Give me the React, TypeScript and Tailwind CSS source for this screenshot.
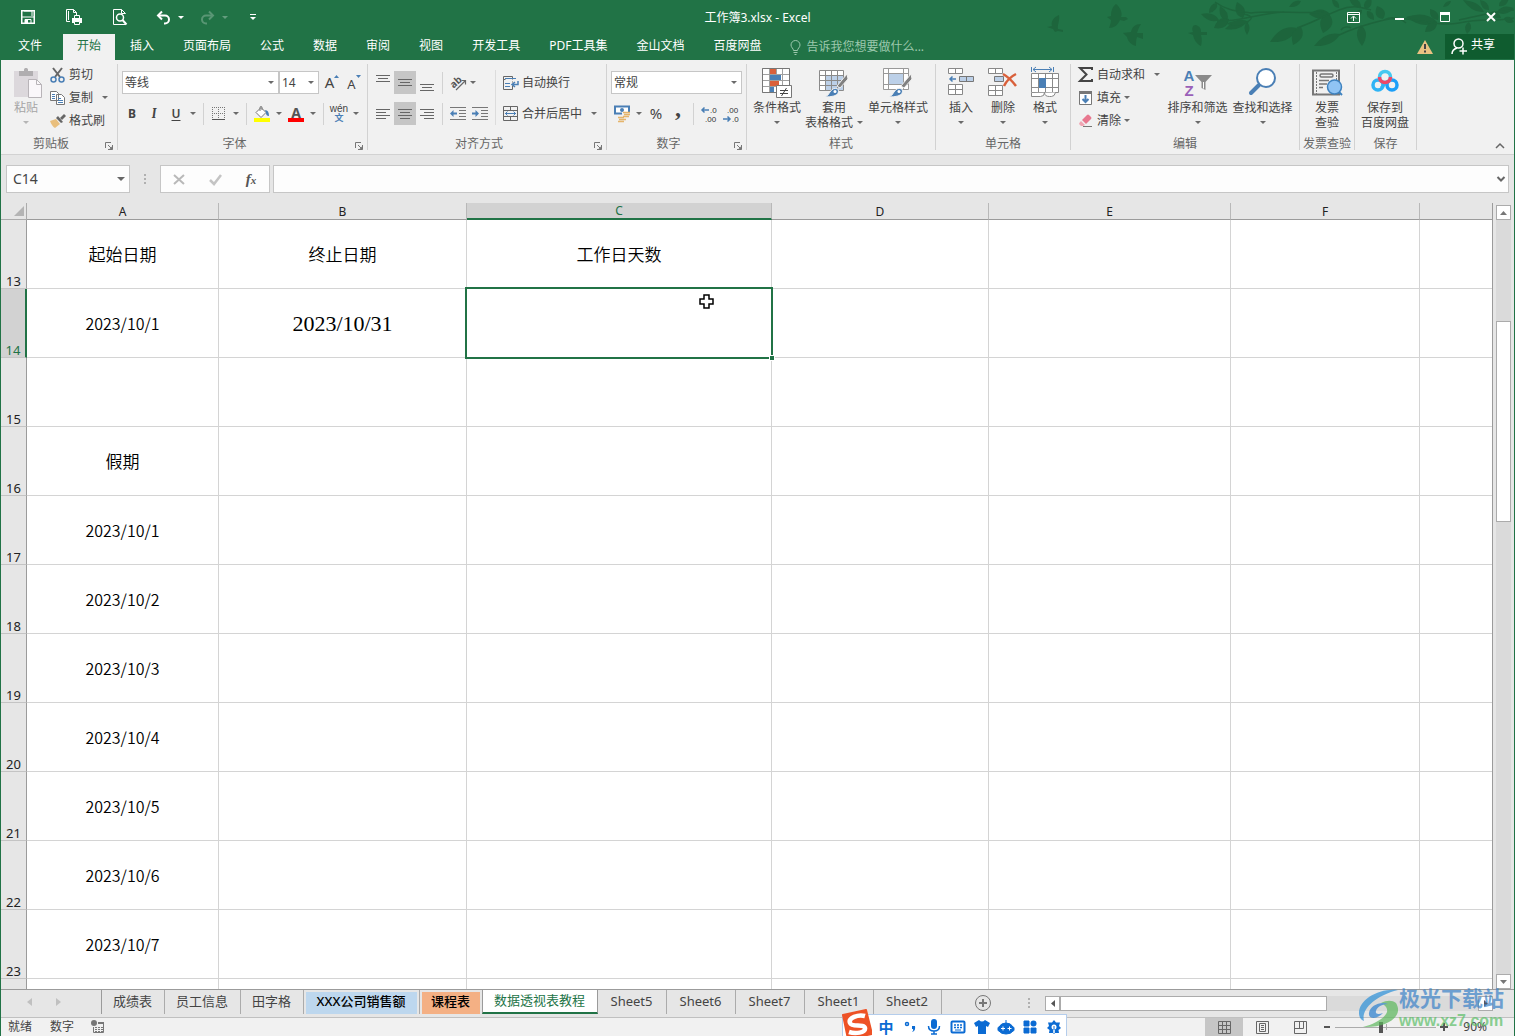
import type { ReactNode } from 'react';
import clsx from 'clsx';

const columns = [
  { name: 'A', width: 'w-[192px]' },
  { name: 'B', width: 'w-[248px]' },
  { name: 'C', width: 'w-[305px]' },
  { name: 'D', width: 'w-[217px]' },
  { name: 'E', width: 'w-[242px]' },
  { name: 'F', width: 'w-[189px]' },
  { name: '', width: '' },
];

const rows: { n: number | null; cells: Record<string, string> }[] = [
  { n: 13, cells: { A: '起始日期', B: '终止日期', C: '工作日天数' } },
  { n: 14, cells: { A: '2023/10/1', B: '2023/10/31' } },
  { n: 15, cells: {} },
  { n: 16, cells: { A: '假期' } },
  { n: 17, cells: { A: '2023/10/1' } },
  { n: 18, cells: { A: '2023/10/2' } },
  { n: 19, cells: { A: '2023/10/3' } },
  { n: 20, cells: { A: '2023/10/4' } },
  { n: 21, cells: { A: '2023/10/5' } },
  { n: 22, cells: { A: '2023/10/6' } },
  { n: 23, cells: { A: '2023/10/7' } },
  { n: null, cells: {} },
];

const tabs = ['文件', '开始', '插入', '页面布局', '公式', '数据', '审阅', '视图', '开发工具', 'PDF工具集', '金山文档', '百度网盘'];

const sheets = [
  { name: '成绩表', width: 'w-[62px]' },
  { name: '员工信息', width: 'w-[76px]' },
  { name: '田字格', width: 'w-[63px]' },
  { name: 'XXX公司销售额', width: 'w-[116px]', fill: 'bg-[#bdd7ee]' },
  { name: '课程表', width: 'w-[62px]', fill: 'bg-[#f4b084]' },
  { name: '数据透视表教程', width: 'w-[116px]', active: true },
  { name: 'Sheet5', width: 'w-[69px]' },
  { name: 'Sheet6', width: 'w-[69px]' },
  { name: 'Sheet7', width: 'w-[69px]' },
  { name: 'Sheet1', width: 'w-[69px]' },
  { name: 'Sheet2', width: 'w-[68px]' },
];

/* ---------- small shared pieces ---------- */

function Svg({ w, h, children, className }: { w: number; h: number; children: ReactNode; className?: string }) {
  return (
    <svg width={w} height={h} viewBox={`0 0 ${w} ${h}`} fill="none" className={clsx('shrink-0 overflow-visible', className)} aria-hidden="true">
      {children}
    </svg>
  );
}

function Caret({ className = 'text-[#6a6a6a]' }: { className?: string }) {
  return (
    <Svg w={6} h={3} className={className}>
      <path d="M0 0h6L3 3z" fill="currentColor" />
    </Svg>
  );
}

function CaretButton({ label, className = 'w-3' }: { label: string; className?: string }) {
  return (
    <button aria-label={label} className={clsx('flex h-[22px] shrink-0 items-center justify-center', className)}>
      <Caret />
    </button>
  );
}

function Tool({ label, on, children }: { label: string; on?: boolean; children: ReactNode }) {
  return (
    <button
      aria-label={label}
      className={clsx('flex h-[23px] w-[22px] shrink-0 items-center justify-center', on && 'bg-[#c6c6c6]')}
    >
      {children}
    </button>
  );
}

function Sep() {
  return <div className="mx-1 h-[22px] w-px shrink-0 bg-[#d2d2d2]" />;
}

function Group({ title, launcher, width, children }: { title: string; launcher?: boolean; width: string; children: ReactNode }) {
  return (
    <>
      <section aria-label={title} className={clsx('flex shrink-0 flex-col', width)}>
        <div className="flex h-[74px]">{children}</div>
        <div className="flex h-5 items-center text-[#666]">
          <span className="flex-1 text-center whitespace-nowrap">{title}</span>
          {launcher && (
            <button aria-label={`${title}设置`} className="flex w-4 items-center justify-center pt-1">
              <Svg w={8} h={8}>
                <path d="M.5 6V.5H6M3 3l3 3M7.500 3v4.500H3" stroke="#777" />
                <path d="M7.500 4v3.500H4z" fill="#777" />
              </Svg>
            </button>
          )}
        </div>
      </section>
      <div className="my-1 w-px shrink-0 bg-[#d2d2d2]" />
    </>
  );
}

function BigButton({ lines, icon, width, caret, inlineCaret }: { lines: string[]; icon: ReactNode; width: string; caret?: boolean; inlineCaret?: boolean }) {
  return (
    <button className={clsx('flex shrink-0 flex-col items-center pt-2 leading-[15px] whitespace-nowrap', width)}>
      <span className="flex h-[32px] items-start">{icon}</span>
      {lines.map((l, i) => (
        <span key={l} className="flex items-center gap-1">
          {l}
          {inlineCaret && i === lines.length - 1 && <Caret />}
        </span>
      ))}
      {caret && (
        <span className="flex h-[15px] items-center">
          <Caret />
        </span>
      )}
    </button>
  );
}

function SelectBox({ label, value, width }: { label: string; value: string; width: string }) {
  return (
    <div className={clsx('relative h-[23px] shrink-0', width)}>
      <select aria-label={label} className="h-full w-full appearance-none border border-[#c6c6c6] bg-white pl-[2px] text-[#444]">
        <option>{value}</option>
      </select>
      <span className="pointer-events-none absolute inset-y-0 right-[5px] flex items-center">
        <Caret />
      </span>
    </div>
  );
}

/* ---------- header art ---------- */

function Leaf({ x1, y1, x2, y2, w }: { x1: number; y1: number; x2: number; y2: number; w: number }) {
  const dx = x2 - x1;
  const dy = y2 - y1;
  const len = Math.hypot(dx, dy);
  const nx = (-dy / len) * w;
  const ny = (dx / len) * w;
  const mx = x1 + dx * 0.4;
  const my = y1 + dy * 0.4;
  return <path d={`M${x1} ${y1}Q${mx + nx} ${my + ny} ${x2} ${y2}Q${mx - nx} ${my - ny} ${x1} ${y1}z`} />;
}

const leaves = [
  [178, 3, 170, 13, 6], [180, 20, 162, 14, 7], [188, 21, 181, 6, 7], [190, 19, 175, 28, 9], [204, 18, 198, 2, 9],
  [208, 21, 186, 29, 8], [208, 22, 208, 35, 5], [210, 22, 187, 24, 5],
  [258, 28, 231, 42, 11], [262, 27, 254, 45, 10], [291, 14, 270, 14, 9], [290, 14, 284, 33, 12], [262, 1, 250, 7, 5],
  [300, 8, 293, -1, 5], [322, 7, 310, -2, 7], [326, 9, 332, -2, 7], [323, 10, 316, 16, 5], [328, 11, 335, 20, 6],
  [301, 34, 275, 46, 9], [322, 25, 323, 46, 9], [344, 19, 338, 6, 9], [312, 22, 307, 15, 4],
  [398, 22, 367, 17, 10], [398, 22, 386, 32, 8], [399, 20, 391, 9, 7], [430, 22, 428, 34, 6], [445, 12, 424, 0, 7],
  [450, 10, 441, 0, 6], [452, 12, 462, 18, 6], [460, 6, 470, -2, 6], [458, 12, 475, 8, 7], [412, 1, 404, 7, 4], [465, 18, 475, 22, 6],
];

function HeaderArt() {
  return (
    <svg width="475" height="60" viewBox="0 0 475 60" className="pointer-events-none absolute top-0 right-0" aria-hidden="true">
      <g fill="#1d653c">
        <path d="M20 15C13 18 12 23 13 26L8 27l6 2 2 3 3-1 5 1v-2l-5-1C18 25 21 21 20 15z" />
        <path d="M77 4c-4 3-5 8-5 12l-4 1 4 3c0 3-1 5-2 8 5 0 9-3 11-8l4 1 4-2-2-2-5 0c2-4-1-10-5-13z" />
        <path d="M102 24c-6 0-9 3-10 8l-8 1 4 4c1 5 5 8 9 9 0-4 0-6 1-9l6 2v-6l-6 0c1-3 2-6 4-9z" />
        <path d="M159 26c-4-3-7 1-5 6l-5 1 5 2c1 5 4 9 8 11 1-4 1-7 0-11l6 0v-3l-6 0c0-3-1-5-3-6z" />
        {leaves.map(([x1, y1, x2, y2, w], i) => (
          <Leaf key={i} x1={x1} y1={y1} x2={x2} y2={y2} w={w} />
        ))}
      </g>
      <g fill="none" stroke="#1d653c" strokeWidth="1.500">
        <path d="M176 2C190 12 200 11 212 13C235 10 260 14 285 12M178 21C200 22 215 14 245 12M205 14c8 2 10 4 3 8" />
        <path d="M258 28C275 22 285 16 300 10S325 8 332 10" />
        <path d="M298 36C310 30 320 26 345 20S395 28 420 23S455 22 475 18M420 20C440 16 450 12 475 10M312 28c-4-2-8-1-10 2M345 20c8-4 16-2 22 3" />
      </g>
    </svg>
  );
}

/* ---------- ribbon icons ---------- */

const g = '#777';
const blue = '#4a7fb5';

const PasteIcon = () => (
  <Svg w={28} h={30}>
    <path d="M0 3h24v26H0z" fill="#dcd8dc" />
    <path d="M5 3h5V1.500C10 .5 11 0 12 0s2 .5 2 1.500V3h5v5H5z" fill="#b0aeb0" />
    <path d="M14.500 11.500h8l5 5v13h-13z" fill="#faf7fa" stroke="#b8b4b8" />
    <path d="M22.500 11.500v5h5" stroke="#b8b4b8" />
  </Svg>
);
const CutIcon = () => (
  <Svg w={16} h={16}>
    <path d="M3 1l7 9M12 1L5 10" stroke="#666" strokeWidth="2" />
    <circle cx="3.500" cy="12.500" r="2.500" stroke={blue} strokeWidth="1.500" />
    <circle cx="11.500" cy="12.500" r="2.500" stroke={blue} strokeWidth="1.500" />
  </Svg>
);
const CopyIcon = () => (
  <Svg w={16} h={16}>
    <path d="M.5 1.500h6l2 2v7h-8zM6.500 4.500h5l3 3v7h-8z" fill="#fff" stroke="#777" />
    <path d="M2 4.500h3M2 6.500h3M2 8.500h3M8 8.500h3M8 10.500h5M8 12.500h5" stroke={blue} />
  </Svg>
);
const BrushIcon = () => (
  <Svg w={16} h={16}>
    <path d="M0 8l6-2 4 5-5 4c-2-1-4-4-5-7z" fill="#e9bf7d" />
    <path d="M6 5l2-2 5 6-2 1z" fill="#666" />
    <path d="M10 5l4-4 2 2-4 4z" fill="#666" />
  </Svg>
);
const BorderIcon = () => (
  <Svg w={14} h={14}>
    <path d="M.5 0v12M12.500 0v12M6.500 0v12M0 .5h13M0 6.500h13" stroke={g} strokeDasharray="1 1" />
    <path d="M0 12.500h13" stroke="#555" />
  </Svg>
);
const FillColorIcon = () => (
  <Svg w={16} h={16}>
    <path d="M2 6.500L7 1.500l5 5-5 5z" fill="#fff" stroke="#777" />
    <path d="M6 5V1.500Q6 .5 7 .5t1 1V4" stroke="#777" />
    <path d="M11 4q4 0 4 6-3 0-3-3z" fill={blue} />
    <path d="M0 12h16v4H0z" fill="#ff0" />
  </Svg>
);
const FontColorIcon = () => (
  <span className="flex w-4 flex-col items-center">
    <span className="h-[12px] text-[14px] leading-[14px] font-bold text-[#555]">A</span>
    <span className="h-1 w-4 bg-[#f00]" />
  </span>
);
function Lines({ align }: { align: 'left' | 'center' | 'right' }) {
  return (
    <Svg w={14} h={16}>
      {[14, 10, 14, 10].map((w, i) => (
        <rect key={i} x={align === 'left' ? 0 : align === 'right' ? 14 - w : (14 - w) / 2} y={3 + i * 3} width={w} height="1" fill="#666" />
      ))}
    </Svg>
  );
}
function VLines({ offset }: { offset: number }) {
  return (
    <Svg w={14} h={16}>
      <path d={`M0 ${offset + 0.5}h14M2 ${offset + 3.5}h10M0 ${offset + 6.5}h14`} stroke="#666" />
    </Svg>
  );
}
const OrientIcon = () => (
  <Svg w={17} h={16}>
    <text x="1" y="11" fontSize="10" fontWeight="bold" fill="#555" transform="rotate(-42 6 9)">ab</text>
    <path d="M6 15l9-9M11.500 5.500h4v4" stroke="#666" strokeWidth="1.200" />
  </Svg>
);
function IndentIcon({ right }: { right?: boolean }) {
  return (
    <Svg w={16} h={13}>
      <path d="M0 .5h16M9 3.500h7M9 6.500h7M9 9.500h7M0 12.500h16" stroke="#777" />
      <path d={right ? 'M7 6.500L3.500 3v2.500H0v2h3.500V10z' : 'M0 6.500L3.500 3v2.500H7v2H3.500V10z'} fill={blue} />
    </Svg>
  );
}
const WrapIcon = () => (
  <Svg w={16} h={16}>
    <path d="M.5 1.500h9v3M.5 1.500v13h9v-4M.5 4.500h2M9.500 6.500v1" stroke="#666" />
    <path d="M2 3.500h11M2 8.500h5M2 11.500h5" stroke={blue} />
    <path d="M15 6v3.500h-5M12 7l-3 2.500 3 2.500" stroke={blue} strokeWidth="1.500" />
  </Svg>
);
const MergeIcon = () => (
  <Svg w={16} h={16}>
    <path d="M.5.5h14v14H.5zM.5 4.500h14M.5 10.500h14M7.500.5v4M7.500 10.500v4" stroke="#666" />
    <path d="M2 7.500h11M4.500 5.500l-2 2 2 2M10.500 5.500l2 2-2 2" stroke={blue} />
  </Svg>
);
const MoneyIcon = () => (
  <Svg w={17} h={17}>
    <path d="M1 1.500h14v7H1z" fill="#fff" stroke={blue} strokeWidth="2" />
    <circle cx="8" cy="5" r="2" fill={blue} />
    <path d="M8 7h9v9H4v-4h4z" fill="#f1f1f1" />
    <path d="M9 7.500h7M10 9.500h6M9 11.500h6M4 12.500h6M5 14.500h7M4 16.500h6" stroke="#e5b56c" strokeWidth="1.500" />
  </Svg>
);
function DecimalIcon({ less }: { less?: boolean }) {
  return (
    <Svg w={16} h={18} className="font-['Liberation_Sans',sans-serif]">
      <text x={less ? 4 : 9} y="8" fontSize="8" fill="#333">{less ? '.00' : '.0'}</text>
      <text x={less ? 9 : 4} y="17" fontSize="8" fill="#333">{less ? '.0' : '.00'}</text>
      <path d={less ? 'M0 14h7M4.500 11.500L7 14l-2.500 2.500' : 'M1 5h7M3.500 2.500L1 5l2.500 2.500'} stroke={blue} strokeWidth="1.500" />
    </Svg>
  );
}
const CondIcon = () => (
  <Svg w={30} h={30}>
    <path d="M.5.5h27v24H.5z" fill="#fff" />
    <path d="M.5.5h27v24H.5zM.5 6.500h27M.5 12.500h27M.5 18.500h27M7.500.5v24M14.500.5v24M20.500.5v24" stroke="#a0a0a0" />
    <path d="M8 1h6v5H8zM8 13h9v5H8z" fill="#d9603b" />
    <path d="M8 7h11v5H8zM8 19h4v5H8z" fill={blue} />
    <path d="M.5.5h27v24H.5z" stroke="#777" />
    <path d="M14.500 17.500h15v12h-15z" fill="#fff" stroke="#777" />
    <path d="M18 22.500h8M18 25.500h8M24.500 20l-5 8" stroke="#444" />
  </Svg>
);
const Brush = () => (
  <>
    <path d="M18 18l10-12 1 5-8 9z" fill="#808080" stroke="#f1f1f1" />
    <path d="M6 29q3-1 5-5 3-5 8-3 2 5-4 7-4 1-9 1z" fill={blue} stroke="#f1f1f1" />
    <circle cx="16" cy="23.500" r="1.500" fill="#fff" />
  </>
);
const TableIcon = () => (
  <Svg w={30} h={30}>
    <path d="M.5 2.500h24v20H.5z" fill="#fff" />
    <path d="M7 8h17v14H7z" fill="#bcd0e8" />
    <path d="M.5 2.500h24v20H.5zM.5 7.500h24M.5 12.500h24M.5 17.500h24M6.500 2.500v20M12.500 2.500v20M18.500 2.500v20" stroke="#8a8a8a" />
    <Brush />
  </Svg>
);
const StyleIcon = () => (
  <Svg w={30} h={30}>
    <path d="M.5.5h25v21H.5z" fill="#fff" />
    <path d="M.5.5h25v21H.5zM.5 5.500h25M.5 16.500h25M5.500.5v21M20.500.5v21" stroke="#999" />
    <path d="M6 6h14v10H6z" fill="#bcd0e8" />
    <Brush />
  </Svg>
);
const InsertIcon = () => (
  <Svg w={27} h={28}>
    <path d="M.5.5h14v5H.5zM7.500.5v5M.5 16.500h14v10H.5zM.5 21.500h14M7.500 16.500v10" fill="#fff" stroke="#888" />
    <path d="M11.500 8.500h14v5h-14zM18.500 8.500v5" fill="#bcd0e8" stroke="#777" />
    <path d="M8 11H2M4.500 8.500L2 11l2.500 2.500" stroke={blue} strokeWidth="1.500" />
  </Svg>
);
const DeleteIcon = () => (
  <Svg w={30} h={28}>
    <path d="M.5.5h14v5H.5zM7.500.5v5M.5 17.500h14v10H.5zM.5 22.500h14M7.500 17.500v10" fill="#fff" stroke="#888" />
    <path d="M6.500 8.500h9v5h-9z" fill="#bcd0e8" stroke="#777" />
    <path d="M15 6q7 4 13 12M28 6q-8 4-12 12" stroke="#d9603b" strokeWidth="2.500" />
  </Svg>
);
const FormatIcon = () => (
  <Svg w={28} h={31}>
    <path d="M.5-1v5M22.500-1v5M2 1.500h19M5-1L2 1.500 5 4M18-1l3 2.500L18 4" stroke={blue} />
    <path d="M.5 5.500h27v19H.5z" fill="#fff" />
    <path d="M.5 5.500h27v19H.5zM.5 10.500h27M.5 19.500h27M7.500 5.500v19M14.500 5.500v19M21.500 5.500v19" stroke="#8a8a8a" />
    <path d="M8 10h7v10H8z" fill={blue} />
    <path d="M.5 25v3.500h9q4 0 4-4 0 4 5 4h2q3 0 4-4" stroke="#888" fill="#fff" />
  </Svg>
);
const SumIcon = () => (
  <Svg w={16} h={16}>
    <path d="M14 3V1H2l6.500 6.500L2 14h12v-2" stroke="#444" strokeWidth="2" />
  </Svg>
);
const FillIcon = () => (
  <Svg w={16} h={16}>
    <path d="M1.500 1.500h12v13h-12z" fill="#fff" stroke="#777" />
    <path d="M1 1h13v3H1z" fill="#777" />
    <path d="M7.500 5v7M4.500 9l3 3 3-3" stroke={blue} strokeWidth="2" />
  </Svg>
);
const EraserIcon = () => (
  <Svg w={16} h={16}>
    <path d="M4 7l5-5q1-1 2 0l2 2q1 1 0 2L8 11z" fill="#e8788f" />
    <path d="M3 8l4 4-2 1H3L1 11q0-1 2-3z" fill="#f0a5b3" />
    <path d="M5 13.500h9" stroke="#777" />
  </Svg>
);
const SortIcon = () => (
  <span className="flex items-start">
    <span className="flex w-[12px] flex-col items-center font-['Liberation_Sans',sans-serif] text-[15px] leading-[15px] font-bold">
      <span className="text-[#4a7fb5]">A</span>
      <span className="text-[#9a60b8]">Z</span>
    </span>
    <Svg w={17} h={24}>
      <path d="M0 7h17l-6.500 7v8l-4-2v-6z" fill="#8a8a8a" />
      <path d="M8 14v6l1 1v-7z" fill="#fff" />
    </Svg>
  </span>
);
const FindIcon = () => (
  <Svg w={28} h={28}>
    <path d="M10 17L2 25" stroke={blue} strokeWidth="4" strokeLinecap="round" />
    <circle cx="17" cy="10" r="9" fill="#fff" stroke={blue} strokeWidth="2" />
  </Svg>
);
const InvoiceIcon = () => (
  <Svg w={30} h={30}>
    <path d="M1 2.500h26v24H1z" stroke="#777" strokeWidth="2" />
    <path d="M4.500 4v22M24.500 4v22" stroke="#777" strokeDasharray="2 1" />
    <rect x="8" y="6" width="13" height="3" rx="1.500" stroke="#777" strokeWidth="1.500" />
    <path d="M7 12.500h10M7 16h8M7 19.500h4" stroke="#777" strokeWidth="1.500" />
    <circle cx="22.500" cy="19" r="7" fill="#90c4f4" stroke="#3f83c0" strokeWidth="1.500" />
    <path d="M27 24l3 3" stroke="#3f83c0" strokeWidth="2" />
  </Svg>
);
const NetdiskIcon = () => (
  <Svg w={28} h={26}>
    <circle cx="7" cy="17" r="5" stroke="#2fb4f5" strokeWidth="3.500" />
    <circle cx="21" cy="17" r="5" stroke="#1c9ff8" strokeWidth="3.500" />
    <path d="M10 20l7-7" stroke="#2fb4f5" strokeWidth="3" />
    <circle cx="14" cy="9" r="5.500" stroke="#45c8f0" strokeWidth="3.500" />
    <path d="M8.500 9a5.500 5.500 0 0011 0" stroke="#ee4868" strokeWidth="3.500" />
  </Svg>
);

/* ---------- window parts ---------- */

function TitleBar() {
  return (
    <div className="relative flex h-[34px] items-center text-white">
      <div className="flex flex-1 items-center">
        <button aria-label="保存" className="flex w-[46px] justify-center pl-2">
          <Svg w={14} h={14}>
            <path d="M.75.75h12.500v12.500H.75z" stroke="#fff" strokeWidth="1.500" />
            <path d="M1 7h12M3 1h8v5M4 14V9.500h6V14" stroke="#fff" />
            <path d="M4 10h3v4H4z" fill="#fff" />
          </Svg>
        </button>
        <button aria-label="快速打印" className="flex w-[46px] justify-center pl-2">
          <Svg w={17} h={17}>
            <path d="M4 12.500H.500V.500h7l3 3V6M7.500.500v3h3" stroke="#fff" />
            <path d="M2.500 2v9" stroke="#fff" />
            <path d="M6 9h10v5H6z" fill="#fff" />
            <path d="M8.500 9V6.500h5V9M8.500 12.500h5v3h-5z" fill="#217346" stroke="#fff" />
          </Svg>
        </button>
        <button aria-label="打印预览" className="flex w-[46px] justify-center pl-2">
          <Svg w={15} h={17}>
            <path d="M12.500 13v2.500H.500V.500h8l4 4M8.500.500v4h4" stroke="#fff" />
            <circle cx="7" cy="8.500" r="3.500" stroke="#fff" strokeWidth="1.500" />
            <path d="M9.500 11l4 4.500" stroke="#fff" strokeWidth="2" />
          </Svg>
        </button>
        <button aria-label="撤消" className="flex w-[36px] justify-center pl-3">
          <Svg w={15} h={13}>
            <path d="M2 4.500h7a4 4 0 010 8H8" stroke="#fff" strokeWidth="2" />
            <path d="M6 .5l-4 4 4 4" stroke="#fff" strokeWidth="2" />
          </Svg>
        </button>
        <button aria-label="撤消列表" className="flex w-3 justify-center">
          <Caret className="text-white" />
        </button>
        <button aria-label="恢复" className="flex w-[32px] justify-center pl-2 opacity-25">
          <Svg w={15} h={13}>
            <path d="M13 4.500H6a4 4 0 000 8h1" stroke="#fff" strokeWidth="2" />
            <path d="M9 .5l4 4-4 4" stroke="#fff" strokeWidth="2" />
          </Svg>
        </button>
        <button aria-label="恢复列表" className="flex w-3 justify-center opacity-30">
          <Caret className="text-white" />
        </button>
        <button aria-label="自定义快速访问工具栏" className="flex w-[32px] justify-center pl-3">
          <Svg w={6} h={7}>
            <path d="M0 .5h6" stroke="#fff" />
            <path d="M0 3h6L3 6z" fill="#fff" />
          </Svg>
        </button>
      </div>
      <h1 className="pt-px text-[12px]">工作簿3.xlsx - Excel</h1>
      <div className="flex flex-1 justify-end">
        <button aria-label="功能区显示选项" className="flex h-8 w-[46px] items-center justify-center">
          <Svg w={13} h={11}>
            <path d="M.5.5h12v10H.5zM.5 2.500h12" stroke="#fff" />
            <path d="M6.500 9V4.500M4 6.500l2.500-2.500L9 6.500" stroke="#fff" />
          </Svg>
        </button>
        <button aria-label="最小化" className="flex h-8 w-[46px] items-center justify-center pt-1">
          <Svg w={9} h={2}>
            <path d="M0 1h9" stroke="#fff" strokeWidth="2" />
          </Svg>
        </button>
        <button aria-label="最大化" className="flex h-8 w-[46px] items-center justify-center">
          <Svg w={10} h={10}>
            <path d="M.5.5h9v9h-9z" stroke="#fff" />
            <path d="M0 0h10v3H0z" fill="#fff" />
          </Svg>
        </button>
        <button aria-label="关闭" className="flex h-8 w-[46px] items-center justify-center">
          <Svg w={10} h={10}>
            <path d="M1 1l8 8M9 1L1 9" stroke="#fff" strokeWidth="2" />
          </Svg>
        </button>
      </div>
    </div>
  );
}

function TabRow() {
  return (
    <div className="relative flex h-[26px] items-stretch text-white">
      <nav className="flex gap-px pl-[3px]">
        {tabs.map((t) => (
          <button
            key={t}
            className={clsx(
              'px-[14px] pb-[2px] whitespace-nowrap',
              t === '文件' && 'mr-[6px]',
              t === '开始' && 'bg-[#f1f1f1] text-[#217346]',
            )}
          >
            {t}
          </button>
        ))}
      </nav>
      <label className="ml-[15px] flex flex-1 items-center gap-[5px] text-[#9cc8ad]">
        <Svg w={11} h={15}>
          <path d="M3.500 10.500C3.500 8.500 1 7.500 1 5a4.500 4.500 0 019 0c0 2.500-2.500 3.500-2.500 5.500zM3.500 12.500h4M4.500 14.500h2" stroke="#9cc8ad" />
        </Svg>
        <input aria-label="告诉我" placeholder="告诉我您想要做什么..." className="w-full bg-transparent outline-none placeholder:text-[#9cc8ad]" />
      </label>
      <button aria-label="警告" className="flex w-[40px] items-center justify-center">
        <Svg w={16} h={14}>
          <path d="M8 0l8 14H0z" fill="#eac282" />
          <path d="M8 4v5M8 10.500v2" stroke="#444" strokeWidth="2" />
        </Svg>
      </button>
      <button className="mb-px flex w-[69px] items-center gap-1 bg-[#0f5c2f] pb-1 pl-[6px]">
        <Svg w={16} h={17} className="mt-1">
          <circle cx="7.500" cy="5.500" r="4.500" stroke="#fff" strokeWidth="1.500" />
          <path d="M1 16c0-4 2-5 5-6M12 9.500v7M8.500 13H16" stroke="#fff" strokeWidth="1.500" />
        </Svg>
        共享
      </button>
    </div>
  );
}

function Ribbon() {
  return (
    <div className="flex h-[95px] border-b border-[#d2d2d2] bg-[#f1f1f1] text-[#444]">
      <Group title="剪贴板" launcher width="w-[116px]">
        <button className="flex w-[49px] flex-col items-center pt-2 pr-[1px] pl-[2px] leading-[15px] text-[#a5a5a5]">
          <span className="h-8 pl-1">
            <PasteIcon />
          </span>
          粘贴
          <span className="flex h-[15px] items-center">
            <Caret className="text-[#b5b5b5]" />
          </span>
        </button>
        <div className="flex flex-col pt-[3px]">
          <button className="flex h-[23px] items-center gap-[3px]">
            <CutIcon />
            剪切
          </button>
          <div className="flex h-[23px] items-center">
            <button className="flex items-center gap-[3px]">
              <CopyIcon />
              复制
            </button>
            <CaretButton label="复制选项" className="ml-[6px] w-3" />
          </div>
          <button className="flex h-[23px] items-center gap-[3px]">
            <BrushIcon />
            格式刷
          </button>
        </div>
      </Group>

      <Group title="字体" launcher width="w-[249px]">
        <div className="flex flex-col gap-2 pt-[11px] pl-[3px]">
          <div className="flex pl-px">
            <SelectBox label="字体" value="等线" width="w-[157px]" />
            <SelectBox label="字号" value="14" width="w-[40px]" />
            <div className="flex pl-[2px]">
              <Tool label="增大字号">
                <span className="text-[15px]">A</span>
                <Svg w={5} h={3} className="mb-[12px]">
                  <path d="M0 3h5L2.500 0z" fill={blue} />
                </Svg>
              </Tool>
              <Tool label="减小字号">
                <span className="pt-1 text-[13px]">A</span>
                <Svg w={5} h={3} className="mb-[12px]">
                  <path d="M0 0h5L2.500 3z" fill={blue} />
                </Svg>
              </Tool>
            </div>
          </div>
          <div className="flex items-center">
            <Tool label="加粗"><b>B</b></Tool>
            <Tool label="倾斜"><i className="font-serif text-[13px] font-bold">I</i></Tool>
            <Tool label="下划线"><span className="font-semibold underline underline-offset-2">U</span></Tool>
            <CaretButton label="下划线选项" />
            <Sep />
            <Tool label="边框"><BorderIcon /></Tool>
            <CaretButton label="边框选项" />
            <Sep />
            <Tool label="填充颜色"><FillColorIcon /></Tool>
            <CaretButton label="填充颜色选项" />
            <Tool label="字体颜色"><FontColorIcon /></Tool>
            <CaretButton label="字体颜色选项" />
            <Sep />
            <Tool label="拼音">
              <span className="flex flex-col items-center font-['Liberation_Sans','Noto_Sans_CJK_SC',sans-serif] text-[10px] leading-[9px]">
                wén
                <span className="text-[9px] leading-[11px] font-bold text-[#4a7fb5]">文</span>
              </span>
            </Tool>
            <CaretButton label="拼音选项" />
          </div>
        </div>
      </Group>

      <Group title="对齐方式" launcher width="w-[238px]">
        <div className="flex flex-col gap-2 pt-[11px] pl-1">
          <div className="flex items-center">
            <Tool label="顶端对齐"><VLines offset={0} /></Tool>
            <Tool label="垂直居中" on><VLines offset={4} /></Tool>
            <Tool label="底端对齐"><VLines offset={9} /></Tool>
            <Sep />
            <Tool label="方向"><OrientIcon /></Tool>
            <CaretButton label="方向选项" className="w-2" />
          </div>
          <div className="flex items-center">
            <Tool label="左对齐"><Lines align="left" /></Tool>
            <Tool label="居中" on><Lines align="center" /></Tool>
            <Tool label="右对齐"><Lines align="right" /></Tool>
            <Sep />
            <Tool label="减少缩进量"><IndentIcon /></Tool>
            <Tool label="增加缩进量"><IndentIcon right /></Tool>
          </div>
        </div>
        <div className="mx-1 mt-[10px] h-[55px] w-px bg-[#dcdcdc]" />
        <div className="flex flex-col gap-2 pt-[11px] pl-[3px]">
          <button className="flex h-[23px] items-center gap-[3px]">
            <WrapIcon />
            自动换行
          </button>
          <div className="flex h-[23px] items-center">
            <button className="flex items-center gap-[3px]">
              <MergeIcon />
              合并后居中
            </button>
            <CaretButton label="合并选项" className="ml-[6px] w-3" />
          </div>
        </div>
      </Group>

      <Group title="数字" launcher width="w-[139px]">
        <div className="flex flex-col gap-2 pt-[11px] pl-1">
          <SelectBox label="数字格式" value="常规" width="w-[131px]" />
          <div className="flex items-center">
            <Tool label="会计数字格式"><MoneyIcon /></Tool>
            <CaretButton label="会计数字格式选项" />
            <Tool label="百分比样式"><span className="text-[15px]">%</span></Tool>
            <Tool label="千位分隔样式"><span className="pb-3 font-['Liberation_Serif',serif] text-[24px] font-bold">,</span></Tool>
            <Sep />
            <Tool label="增加小数位数"><DecimalIcon /></Tool>
            <Tool label="减少小数位数"><DecimalIcon less /></Tool>
          </div>
        </div>
      </Group>

      <Group title="样式" width="w-[188px]">
        <div className="flex pl-1">
          <BigButton lines={['条件格式']} icon={<CondIcon />} width="w-[52px]" caret />
          <BigButton lines={['套用', '表格格式']} icon={<TableIcon />} width="w-[62px]" inlineCaret />
          <BigButton lines={['单元格样式']} icon={<StyleIcon />} width="w-[66px]" caret />
        </div>
      </Group>

      <Group title="单元格" width="w-[134px]">
        <div className="flex pl-1">
          <BigButton lines={['插入']} icon={<InsertIcon />} width="w-[42px]" caret />
          <BigButton lines={['删除']} icon={<DeleteIcon />} width="w-[42px]" caret />
          <BigButton lines={['格式']} icon={<FormatIcon />} width="w-[42px]" caret />
        </div>
      </Group>

      <Group title="编辑" width="w-[228px]">
        <div className="flex w-[94px] flex-col pt-[3px] pl-[7px]">
          <div className="flex h-[23px] items-center">
            <button className="flex items-center gap-[3px]">
              <SumIcon />
              自动求和
            </button>
            <CaretButton label="求和选项" className="ml-[6px] w-3" />
          </div>
          <div className="flex h-[23px] items-center">
            <button className="flex items-center gap-[3px]">
              <FillIcon />
              填充
            </button>
            <CaretButton label="填充选项" />
          </div>
          <div className="flex h-[23px] items-center">
            <button className="flex items-center gap-[3px]">
              <EraserIcon />
              清除
            </button>
            <CaretButton label="清除选项" />
          </div>
        </div>
        <BigButton lines={['排序和筛选']} icon={<SortIcon />} width="w-[65px]" caret />
        <BigButton lines={['查找和选择']} icon={<FindIcon />} width="w-[65px]" caret />
      </Group>

      <Group title="发票查验" width="w-[54px]">
        <BigButton lines={['发票', '查验']} icon={<InvoiceIcon />} width="w-[54px]" />
      </Group>

      <Group title="保存" width="w-[61px]">
        <BigButton lines={['保存到', '百度网盘']} icon={<NetdiskIcon />} width="w-[60px]" />
      </Group>

      <div className="flex flex-1 items-end justify-end pr-[9px] pb-[5px]">
        <button aria-label="折叠功能区">
          <Svg w={10} h={6}>
            <path d="M1 5l4-4 4 4" stroke="#666" strokeWidth="1.500" />
          </Svg>
        </button>
      </div>
    </div>
  );
}

function FormulaBar() {
  return (
    <div className="flex h-[48px] items-start pt-[10px] pr-[5px] pl-[5px]">
      <div className="relative h-7 w-[124px]">
        <input aria-label="名称框" defaultValue="C14" className="h-full w-full border border-[#c6c6c6] bg-[#fdfdfd] pb-[2px] pl-[6px] text-[14px] text-[#444]" />
        <button aria-label="名称列表" className="absolute inset-y-0 right-[5px] flex items-center">
          <Svg w={8} h={4}>
            <path d="M0 0h8L4 4z" fill="#666" />
          </Svg>
        </button>
      </div>
      <div className="flex h-7 w-[30px] items-center justify-center">
        <Svg w={2} h={10}>
          <path d="M0 0h2v2H0zM0 4h2v2H0zM0 8h2v2H0z" fill="#b0b0b0" />
        </Svg>
      </div>
      <div className="flex h-7 w-[110px] border border-[#c6c6c6] bg-[#fdfdfd]">
        <button aria-label="取消" className="flex flex-1 items-center justify-center">
          <Svg w={12} h={11}>
            <path d="M1 1l10 9M11 1L1 10" stroke="#b9b9b9" strokeWidth="2" />
          </Svg>
        </button>
        <button aria-label="输入" className="flex flex-1 items-center justify-center">
          <Svg w={13} h={11}>
            <path d="M1 6l4 4 7-9" stroke="#c4c4c4" strokeWidth="2.500" />
          </Svg>
        </button>
        <button aria-label="插入函数" className="flex-1 font-['Liberation_Serif',serif] text-[15px] leading-[26px] font-bold text-[#555] italic">
          f<span className="text-[11px]">x</span>
        </button>
      </div>
      <div className="relative ml-[3px] h-7 flex-1">
        <input aria-label="编辑栏" className="h-full w-full border border-[#c6c6c6] bg-[#fdfdfd] px-2 text-[14px]" />
        <button aria-label="展开编辑栏" className="absolute inset-y-0 right-1 flex items-center">
          <Svg w={8} h={6}>
            <path d="M.5 1l3.500 3.500L7.500 1" stroke="#666" strokeWidth="2" />
          </Svg>
        </button>
      </div>
    </div>
  );
}

function Grid() {
  return (
    <div className="min-w-0 flex-1 overflow-hidden border-r border-[#9b9b9b]">
      <table className="w-full table-fixed border-separate border-spacing-0">
        <thead>
          <tr className="h-[17px] text-[12px] leading-[15px] text-[#222]">
            <th aria-label="全选" className="w-[26px] border-r border-b border-[#ababab] p-0">
              <Svg w={10} h={10} className="ml-auto mr-[2px]">
                <path d="M10 0v10H0z" fill="#b4b4b4" />
              </Svg>
            </th>
            {columns.map((c, i) => (
              <th
                key={i}
                className={clsx(
                  'p-0 align-bottom font-normal',
                  c.width,
                  i < 6 && 'border-r border-r-[#b8b8b8]',
                  c.name === 'C' ? 'border-b-2 border-b-[#217346] bg-[#d2d2d2] text-[#217346]' : 'border-b border-b-[#9b9b9b]',
                )}
              >
                {c.name}
              </th>
            ))}
          </tr>
        </thead>
        <tbody>
          {rows.map((r, ri) => (
            <tr key={ri} className="h-[69px]">
              <th
                className={clsx(
                  'border-b border-b-[#c4c4c4] p-0 text-center align-bottom text-[13px] leading-[14px] font-normal',
                  r.n === 14 ? 'border-r-2 border-r-[#217346] bg-[#d2d2d2] text-[#217346]' : 'border-r border-r-[#9b9b9b] text-[#222]',
                )}
              >
                {r.n}
              </th>
              {columns.map((c, i) => {
                const selected = r.n === 14 && c.name === 'C';
                return (
                  <td
                    key={i}
                    className={clsx(
                      'relative border-b border-[#d4d4d4] bg-white p-0 text-center text-black',
                      i < 6 && 'border-r',
                      r.n === 14 && c.name === 'B'
                        ? "font-['Liberation_Serif',serif] text-[22px]"
                        : r.cells[c.name]?.startsWith('2023')
                          ? "font-['Noto_Sans_CJK_SC',sans-serif] text-[16px] font-[350]"
                          : "font-['Noto_Sans_CJK_SC',sans-serif] text-[17px] font-[350]",
                    )}
                  >
                    {r.cells[c.name]}
                    {selected && (
                      <>
                        <div className="absolute -top-[2px] -right-[2px] -bottom-[2px] -left-[2px] z-10 border-2 border-[#217346]" />
                        <div className="absolute -right-1 -bottom-1 z-10 size-[6px] border border-white bg-[#217346]" />
                        <svg width="15" height="15" viewBox="0 0 15 15" className="absolute top-[5px] left-[232px] z-10" aria-hidden="true">
                          <path d="M5 1h5v4h4v5h-4v4H5v-4H1V5h4z" fill="#fff" stroke="#000" strokeWidth="1.500" />
                        </svg>
                      </>
                    )}
                  </td>
                );
              })}
            </tr>
          ))}
        </tbody>
      </table>
    </div>
  );
}

function VerticalScroll() {
  return (
    <div className="flex w-[21px] shrink-0 flex-col pt-[2px] pr-[3px] pl-[3px]">
      <button aria-label="向上滚动" className="flex h-[15px] items-center justify-center border border-[#ababab] bg-white">
        <Svg w={7} h={4}>
          <path d="M0 4h7L3.500 0z" fill="#777" />
        </Svg>
      </button>
      <div className="flex flex-1 flex-col bg-[#dadada]">
        <div className="grow-[101]" />
        <div className="grow-[200] border border-[#ababab] bg-white" />
        <div className="grow-[454]" />
      </div>
      <button aria-label="向下滚动" className="flex h-[15px] items-center justify-center border border-[#ababab] bg-white">
        <Svg w={7} h={4}>
          <path d="M0 0h7L3.500 4z" fill="#777" />
        </Svg>
      </button>
    </div>
  );
}

function SheetTabs() {
  return (
    <div className="flex h-[29px] items-start border-t border-b border-t-[#9b9b9b] border-b-[#c0c0c0] text-[13px] text-[#444]">
      <div className="flex h-[24px] w-[100px] shrink-0 items-center gap-6 pl-[26px]">
        <button aria-label="上一个工作表">
          <Svg w={5} h={8}><path d="M5 0v8L0 4z" fill="#c0c0c0" /></Svg>
        </button>
        <button aria-label="下一个工作表">
          <Svg w={5} h={8}><path d="M0 0v8l5-4z" fill="#c0c0c0" /></Svg>
        </button>
      </div>
      <div className="flex shrink-0">
        {sheets.map((s, i) => (
          <div
            key={s.name}
            className={clsx(
              'flex h-[24px] shrink-0',
              s.width,
              i === 0 && 'box-content border-l border-l-[#9b9b9b]',
              !s.active && s.name !== '课程表' && 'border-r border-r-[#ababab]',
            )}
          >
            <button
              className={clsx(
                'flex-1 pr-px text-center whitespace-nowrap',
                s.active && 'border-x border-b-2 border-x-[#9b9b9b] border-b-[#217346] bg-white text-[#217346]',
                s.fill ? 'mx-[2px] mt-[2px] pb-[4px] leading-[18px] font-medium text-black' : 'pb-[2px] leading-[20px]',
                s.fill,
              )}
            >
              {s.name}
            </button>
          </div>
        ))}
      </div>
      <button aria-label="新工作表" className="ml-[33px] flex h-[26px] shrink-0 items-center">
        <Svg w={16} h={16}>
          <circle cx="8" cy="8" r="7.500" stroke="#777" />
          <path d="M8 4v8M4 8h8" stroke="#777" strokeWidth="2" />
        </Svg>
      </button>
      <div className="ml-[37px] flex h-[26px] items-center">
        <Svg w={2} h={10}>
          <path d="M0 0h2v2H0zM0 4h2v2H0zM0 8h2v2H0z" fill="#b0b0b0" />
        </Svg>
      </div>
      <div className="mt-[6px] mr-[21px] ml-[15px] flex h-[15px] flex-1 bg-[#dadada]">
        <button aria-label="向左滚动" className="flex w-[15px] items-center justify-center border border-[#ababab] bg-white">
          <Svg w={4} h={7}><path d="M4 0v7L0 3.500z" fill="#555" /></Svg>
        </button>
        <div className="grow-[266] border border-[#ababab] bg-white" />
        <div className="grow-[152]" />
        <button aria-label="向右滚动" className="flex w-[15px] items-center justify-center border border-[#ababab] bg-white">
          <Svg w={4} h={7}><path d="M0 0v7l4-3.500z" fill="#555" /></Svg>
        </button>
      </div>
    </div>
  );
}

function StatusBar() {
  return (
    <footer className="flex h-[18px] items-center bg-[#f1f1f1] pl-[7px] text-[#444]">
      <span>就绪</span>
      <span className="ml-[18px]">数字</span>
      <Svg w={14} h={14} className="ml-[17px]">
        <path d="M7 2.500h5.500v10H2.500V7" stroke="#777" />
        <path d="M7 2h6v2H7z" fill="#777" />
        <path d="M4 7.500h8M4 9.500h8M4 11.500h8" stroke="#777" strokeDasharray="2 1" />
        <circle cx="3" cy="3" r="3" fill="#777" />
      </Svg>
      <div className="ml-auto flex h-full items-center pr-[27px]">
        <button aria-label="普通" className="flex h-full w-[38px] items-center justify-center bg-[#c6c6c6]">
          <Svg w={13} h={13}>
            <path d="M.5.5h12v12H.5zM.5 4.500h12M.5 8.500h12M4.500.5v12M8.500.5v12" stroke="#666" />
          </Svg>
        </button>
        <button aria-label="页面布局" className="flex w-[38px] justify-center">
          <Svg w={13} h={13}>
            <path d="M.5.5h12v12H.5zM3.500 2.500h6v8h-6zM5 4.500h3M5 6.500h3M5 8.500h3" stroke="#666" />
          </Svg>
        </button>
        <button aria-label="分页预览" className="flex w-[38px] justify-center">
          <Svg w={13} h={13}>
            <path d="M.5.5h12v12H.5zM5.500.5v7M9.500.5v7M.5 7.500h9" stroke="#666" />
          </Svg>
        </button>
        <button aria-label="缩小" className="ml-[2px] flex w-[12px] justify-center">
          <Svg w={6} h={2}><path d="M0 1h6" stroke="#555" strokeWidth="2" /></Svg>
        </button>
        <div className="relative mx-[2px] flex items-center">
          <span className="absolute left-1/2 h-[6px] w-px bg-[#ababab]" />
          <input
            type="range"
            aria-label="缩放级别"
            defaultValue={45}
            className="relative h-3 w-[101px] appearance-none bg-transparent [&::-webkit-slider-runnable-track]:h-px [&::-webkit-slider-runnable-track]:bg-[#ababab] [&::-webkit-slider-thumb]:-mt-[5px] [&::-webkit-slider-thumb]:h-[11px] [&::-webkit-slider-thumb]:w-1 [&::-webkit-slider-thumb]:appearance-none [&::-webkit-slider-thumb]:bg-[#555]"
          />
        </div>
        <button aria-label="放大" className="flex w-[12px] justify-center">
          <Svg w={8} h={8}><path d="M0 4h8M4 0v8" stroke="#555" strokeWidth="2" /></Svg>
        </button>
        <span className="ml-[13px]">90%</span>
      </div>
    </footer>
  );
}

function ImeBar() {
  return (
    <div className="absolute bottom-0 left-[841px] flex h-[22px] w-[225px] items-center border border-b-0 border-[#b4cdec] bg-white pt-1">
      <svg width="32" height="30" viewBox="0 0 32 30" className="absolute -top-[6px] -left-[3px]" aria-hidden="true">
        <path d="M3 6L26 1l6 24L8 30z" fill="#ee5226" stroke="#ee5226" strokeLinejoin="round" strokeWidth="2" />
        <path d="M25 7C18 5 8 9 10 14s14 0 15 5-10 6-16 4" fill="none" stroke="#fff" strokeWidth="4.500" />
      </svg>
      <div className="flex items-center gap-2 pb-[2px] pl-[35px] text-[#0b6bd3]">
        <span className="w-4 text-center text-[15px] leading-4 font-bold">中</span>
        <Svg w={16} h={16}>
          <circle cx="5" cy="5" r="1.500" stroke="#0b6bd3" strokeWidth="1.500" />
          <path d="M10 7h3q1 5-3 6 2-2 1-3h-1z" fill="#0b6bd3" />
        </Svg>
        <Svg w={16} h={16}>
          <rect x="5" y="0" width="6" height="10" rx="3" fill="#0b6bd3" />
          <path d="M2.500 7q0 5 5.500 5t5.500-5M8 12v3M5 15h6" stroke="#0b6bd3" strokeWidth="1.500" />
        </Svg>
        <Svg w={16} h={16}>
          <rect x="1.500" y="2.500" width="13" height="11" rx="1" stroke="#0b6bd3" strokeWidth="2" />
          <path d="M4 6h8M4 8.500h8" stroke="#0b6bd3" strokeWidth="1.500" strokeDasharray="2 1" />
          <path d="M5 11h6" stroke="#0b6bd3" />
        </Svg>
        <Svg w={16} h={16}>
          <path d="M5 1q3 3 6 0l5 3-2 4-2-1v8H4V7L2 8 0 4z" fill="#0b6bd3" />
        </Svg>
        <Svg w={16} h={16}>
          <path d="M8 4V1M0 9q0-1 1-1 2-4 7-4t7 4q1 0 1 1v2q0 1-1 1-2 3-7 3t-7-3q-1 0-1-1z" fill="#0b6bd3" stroke="#0b6bd3" />
          <path d="M3 9.500h4M5 7.500v4M9.500 9.500h4M11.500 7.500v4" stroke="#fff" />
        </Svg>
        <Svg w={16} h={16}>
          <path d="M2 2h5v5H2zM2 9h5v5H2zM9 9h5v5H9z" fill="#0b6bd3" stroke="#0b6bd3" strokeLinejoin="round" />
          <circle cx="11.500" cy="4.500" r="3" fill="#0b6bd3" />
        </Svg>
        <Svg w={16} h={16}>
          <path d="M8 1l2 2.500h4L13 7l2 2-2.500 2 .5 3H9l-1 1-1-1H3l.5-3L1 9l2-2-1-3.500h4z" fill="#0b6bd3" />
          <circle cx="8" cy="8" r="2.500" fill="#fff" />
          <path d="M8 7v7" stroke="#fff" strokeWidth="1.500" />
          <path d="M8 7v4" stroke="#0b6bd3" />
        </Svg>
      </div>
    </div>
  );
}

function SiteMark() {
  return (
    <div className="pointer-events-none absolute right-[10px] bottom-[6px] flex items-end opacity-70">
      <svg width="44" height="42" viewBox="0 0 44 42" aria-hidden="true">
        <path d="M40 2C20 0 1 12 1 25c0 4 2 7 5 8C3 22 16 8 40 2z" fill="#2a8fd8" />
        <path d="M38 15C46 28 30 40 5 39c12-3 22-9 24-15 1-5-3-7-6-9 6-3 11-3 15 0z" fill="#5cb85c" />
        <path d="M30 16c-8-3-18 2-19 9s9 6 14 0c-5 2-8 1-7-2 1-4 6-7 12-7z" fill="#2a7fd0" />
      </svg>
      <div className="-ml-[3px] flex flex-col">
        <span className="text-[21px] leading-[25px] font-bold text-[#3b82c8]">极光下载站</span>
        <span className="font-['Liberation_Sans',sans-serif] text-[16px] leading-[19px] font-bold text-[#5cbf68]">www.xz7.com</span>
      </div>
    </div>
  );
}

export default function App() {
  return (
    <div className="relative flex h-screen flex-col overflow-hidden border-x border-[#217346] bg-[#e6e6e6] font-['Noto_Sans','Noto_Sans_CJK_SC',sans-serif] text-[12px]">
      <header className="relative bg-[#217346]">
        <HeaderArt />
        <TitleBar />
        <TabRow />
      </header>
      <Ribbon />
      <FormulaBar />
      <main className="flex min-h-0 flex-1">
        <Grid />
        <VerticalScroll />
      </main>
      <SheetTabs />
      <StatusBar />
      <ImeBar />
      <SiteMark />
    </div>
  );
}
